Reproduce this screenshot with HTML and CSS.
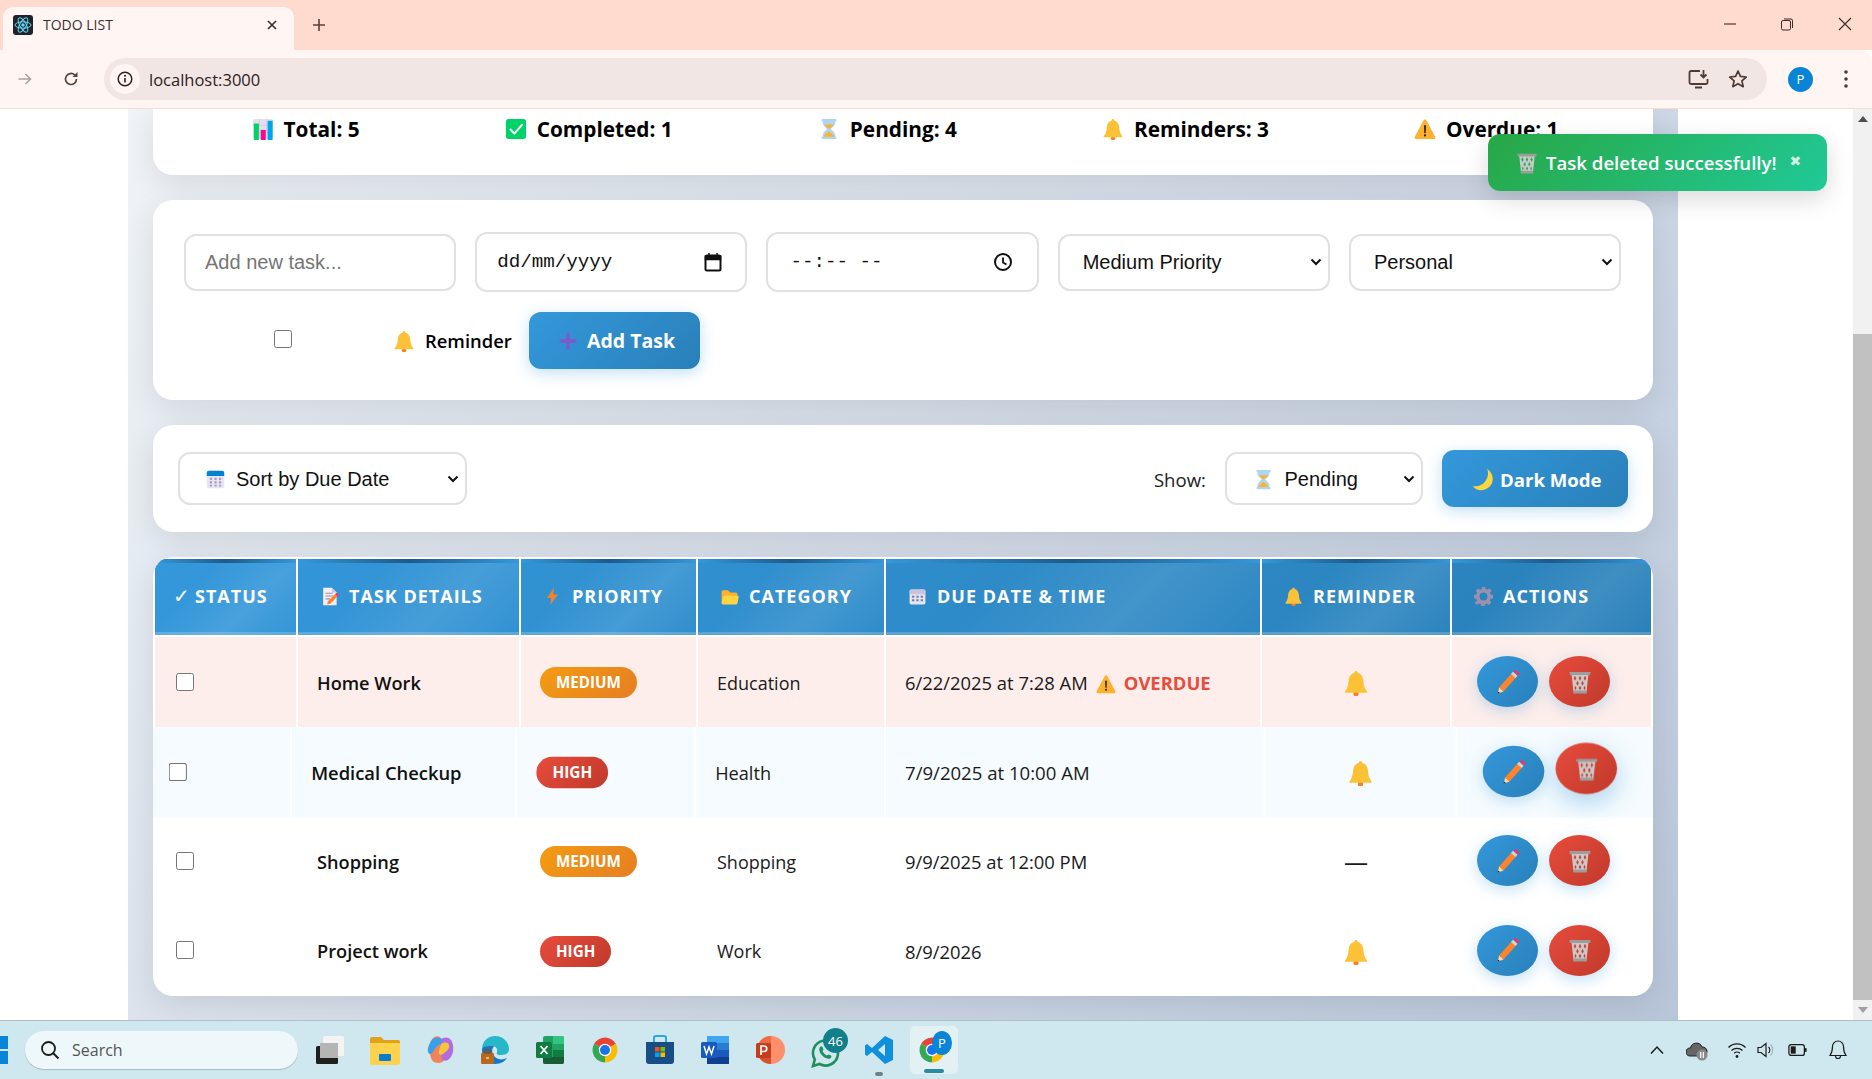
FILE: index.html
```html
<!DOCTYPE html>
<html lang="en">
<head>
<meta charset="utf-8">
<title>TODO LIST</title>
<link rel="stylesheet" href="styles.css">
</head>
<body>
<svg class="defs" xmlns="http://www.w3.org/2000/svg">
  <symbol id="i-chart" viewBox="0 0 24 24"><rect x="1" y="1" width="22" height="22" rx="2" fill="#e6dff0"/><path d="M8 1v22M16 1v22M1 8h22M1 16h22" stroke="#cfc6de" stroke-width=".8"/><rect x="2" y="6" width="5.5" height="18" fill="#00d26a"/><rect x="9.5" y="13" width="5.5" height="11" fill="#f70a8d"/><rect x="17" y="3" width="5.5" height="21" fill="#00a6ed"/></symbol>
  <symbol id="i-check" viewBox="0 0 24 24"><rect x="1" y="1" width="22" height="22" rx="3" fill="#00d26a"/><path d="M6 12.5l4.2 4.5L18.5 7.5" fill="none" stroke="#fff" stroke-width="2.2" stroke-linecap="round" stroke-linejoin="round"/></symbol>
  <symbol id="i-hourglass" viewBox="0 0 24 24"><path d="M4 1h16v2.500h-1C19 9 15 10.500 14 12c1 1.500 5 3 5 8.500h1V23H4v-2.500h1C5 15 9 13.500 10 12 9 10.500 5 9 5 3.500H4z" fill="#aed6f1"/><path d="M7 7h10c-1 2.500-4 3.500-5 5-1-1.500-4-2.500-5-5zM6.500 20.500c.5-3 4-4 5.500-6 1.500 2 5 3 5.500 6z" fill="#ffb02e"/></symbol>
  <symbol id="i-bell" viewBox="0 0 24 24"><circle cx="12" cy="22" r="2.400" fill="#f8802b"/><path d="M12 1c1 0 1.500.7 1.500 1.600C17 3.500 18.500 6.500 18.800 10c.3 4 1 7 3.200 9.500.4.600.2 1.500-.8 1.500H2.800c-1 0-1.200-.9-.8-1.500C4.200 17 4.900 14 5.200 10 5.500 6.500 7 3.500 10.500 2.600 10.500 1.700 11 1 12 1z" fill="#fcc237"/></symbol>
  <symbol id="i-warn" viewBox="0 0 24 24"><path d="M12 1.500c.7 0 1.200.4 1.600 1.100l9.600 18.200c.5 1-.1 2.200-1.300 2.200H2.100C.9 23 .3 21.800.8 20.800L10.400 2.600c.4-.7.900-1.100 1.600-1.100z" fill="#ffb02e"/><path d="M11 8h2l-.3 8.500h-1.400z" fill="#1c1c1c"/><circle cx="12" cy="19" r="1.200" fill="#1c1c1c"/></symbol>
  <symbol id="i-plus" viewBox="0 0 24 24"><path d="M10 2h4v8h8v4h-8v8h-4v-8H2v-4h8z" fill="#7b5bc8"/></symbol>
  <symbol id="i-calendar" viewBox="0 0 24 24"><rect x="2" y="2" width="20" height="20" rx="2.500" fill="#e9e3f2"/><path d="M2 8V4.500A2.500 2.500 0 0 1 4.500 2h15A2.500 2.500 0 0 1 22 4.500V8z" fill="#0084ce"/><g fill="#a79cc2"><rect x="5.500" y="10" width="2.500" height="2.500"/><rect x="10.800" y="10" width="2.500" height="2.500"/><rect x="16" y="10" width="2.500" height="2.500"/><rect x="5.500" y="14" width="2.500" height="2.500"/><rect x="10.800" y="14" width="2.500" height="2.500"/><rect x="16" y="14" width="2.500" height="2.500"/><rect x="5.500" y="18" width="2.500" height="2"/><rect x="10.800" y="18" width="2.500" height="2"/><rect x="16" y="18" width="2.500" height="2"/></g></symbol>
  <symbol id="i-cal-head" viewBox="0 0 24 24"><rect x="2" y="3" width="20" height="19" rx="2" fill="#e8e4f0"/><path d="M2 9V5a2 2 0 0 1 2-2h16a2 2 0 0 1 2 2v4z" fill="#c9c3db"/><g fill="#6f7fa8"><rect x="5" y="11" width="3" height="2.500"/><rect x="10.500" y="11" width="3" height="2.500"/><rect x="16" y="11" width="3" height="2.500"/><rect x="5" y="15.500" width="3" height="2.500"/><rect x="10.500" y="15.500" width="3" height="2.500"/><rect x="16" y="15.500" width="3" height="2.500"/></g></symbol>
  <symbol id="i-moon" viewBox="0 0 24 24"><path d="M16 1c5 3 7 9 5 14s-8 8-13 7c-3-.5-5-2-6-4 5 1 10-1 12.500-5S18 5 16 1z" fill="#fcd53f"/></symbol>
  <symbol id="i-memo" viewBox="0 0 24 24"><path d="M4 1h11l6 6v16H4z" fill="#f3eef8"/><path d="M15 1l6 6h-6z" fill="#cdc4d6"/><path d="M7 8h9M7 11.500h10M7 15h6" stroke="#998ea4" stroke-width="1.300"/><path d="M9 22l1-4 9-9 3 3-9 9z" fill="#ff822d"/><path d="M19 9l1.800-1.800 3 3L22 12z" fill="#f92f60"/></symbol>
  <symbol id="i-bolt" viewBox="0 0 24 24"><path d="M14 1L5 14h5.500L9 23l10-13.500h-6z" fill="#f8802b"/></symbol>
  <symbol id="i-folder" viewBox="0 0 24 24"><path d="M2 6a2 2 0 0 1 2-2h6l3 3h7a2 2 0 0 1 2 2v11H2z" fill="#ffb02e"/><path d="M5 11h17a1.500 1.500 0 0 1 1.500 2l-1.500 7.500a2 2 0 0 1-2 1.500H4a2 2 0 0 1-2-2l1.500-7.500A2 2 0 0 1 5 11z" fill="#fcd53f"/></symbol>
  <symbol id="i-gear" viewBox="0 0 24 24"><path fill-rule="evenodd" d="M10 1h4l.6 3 2.400 1 2.600-1.700 2.800 2.800L20 8.700l1 2.400 3 .6v4l-3 .6-1 2.400 1.700 2.600-2.800 2.800-2.600-1.700-2.400 1-.6 3h-4l-.6-3-2.400-1-2.600 1.700-2.800-2.800L4 18.700l-1-2.400-3-.6v-4l3-.6 1-2.400L2.300 6.100l2.800-2.800L7.700 5l2.400-1zM12 8.500a5 5 0 1 0 0 10 5 5 0 0 0 0-10z" transform="translate(0 -1.500)" fill="#9b91ad"/></symbol>
  <symbol id="i-pencil" viewBox="0 0 24 24"><path d="M3 17.500L16 3l4.500 4L7.500 21.500z" fill="#ff822d"/><path d="M3 17.500l4.500 4-5.500 2z" fill="#fcd7a0"/><path d="M1.800 22l1.200 0 .6 1-1.600.5z" fill="#222"/><path d="M15 4l2-2.200 4.500 4L19.500 8z" fill="#d3d3d3"/><path d="M17.500 1.200l2-1.200 4 3.500-1.500 2.200z" fill="#f92f60"/></symbol>
  <symbol id="i-trash" viewBox="0 0 24 24"><path fill-rule="evenodd" fill="#c9c9c9" d="M3.500 4h17l-2 18h-13zM7 5.800l1.300 2.500L7 10.800 5.700 8.300zM12 5.800l1.300 2.500-1.300 2.500-1.300-2.500zM17 5.800l1.300 2.500-1.300 2.500-1.300-2.500zM9.500 10.800l1.300 2.500-1.300 2.500-1.300-2.500zM14.500 10.800l1.300 2.500-1.300 2.500-1.300-2.500zM7.500 15.800l1 2.300-1 2.200-1-2.200zM12 15.800l1.300 2.300-1.300 2.200-1.300-2.200zM16.500 15.800l1 2.300-1 2.200-1-2.200z"/><path d="M1.500 2h21l-.4 3H1.900z" fill="#9d9d9d"/><path d="M5 20.500h14l-.4 3H5.400z" fill="#9d9d9d"/></symbol>
  <symbol id="i-chrome" viewBox="0 0 48 48"><path d="M24 24L6.700 14A20 20 0 0 1 41.300 14z" fill="#ea4335"/><path d="M24 24L41.300 14A20 20 0 0 1 24 44z" fill="#fbbc04"/><path d="M24 24L24 44A20 20 0 0 1 6.700 14z" fill="#34a853"/><circle cx="24" cy="24" r="10" fill="#fff"/><circle cx="24" cy="24" r="8" fill="#1a73e8"/></symbol>
</svg>

<header class="tabstrip">
  <div class="tab">
    <svg class="favicon" viewBox="0 0 20 20"><rect width="20" height="20" rx="3" fill="#20232a"/><g fill="none" stroke="#61dafb" stroke-width="1"><ellipse cx="10" cy="10" rx="8" ry="3.200"/><ellipse cx="10" cy="10" rx="8" ry="3.200" transform="rotate(60 10 10)"/><ellipse cx="10" cy="10" rx="8" ry="3.200" transform="rotate(120 10 10)"/></g><circle cx="10" cy="10" r="1.700" fill="#61dafb"/></svg>
    <span class="tab-title">TODO LIST</span>
    <svg class="tab-close" viewBox="0 0 12 12"><path d="M2 2l8 8M10 2l-8 8" stroke="#3b2a26" stroke-width="1.600"/></svg>
  </div>
  <svg class="new-tab" viewBox="0 0 14 14"><path d="M7 1v12M1 7h12" stroke="#5b4038" stroke-width="1.600"/></svg>
  <div class="win-controls">
    <svg viewBox="0 0 14 14"><path d="M1 7h12" stroke="#3b2a26" stroke-width="1.100"/></svg>
    <svg viewBox="0 0 14 14"><rect x="1.500" y="3.500" width="9" height="9.500" rx="1.500" fill="none" stroke="#3b2a26"/><path d="M4 2h7a1.500 1.500 0 0 1 1.500 1.500V11" fill="none" stroke="#3b2a26"/></svg>
    <svg viewBox="0 0 14 14"><path d="M1 1l12 12M13 1L1 13" stroke="#3b2a26" stroke-width="1.100"/></svg>
  </div>
</header>

<nav class="toolbar">
  <svg class="nav-icon nav-forward" viewBox="0 0 16 16"><path d="M1.500 8h12M8.500 3l5 5-5 5" fill="none" stroke="#ada3a0" stroke-width="1.600"/></svg>
  <svg class="nav-icon nav-reload" viewBox="0 0 16 16"><path d="M13.500 8a5.500 5.500 0 1 1-1.700-4" fill="none" stroke="#5b4038" stroke-width="1.700"/><path d="M14.500 1v5h-5z" fill="#5b4038"/></svg>
  <div class="omnibox">
    <span class="site-info"><svg viewBox="0 0 16 16"><circle cx="8" cy="8" r="6.800" fill="none" stroke="#2b2220" stroke-width="1.500"/><path d="M8 7v4.500" stroke="#2b2220" stroke-width="1.600"/><circle cx="8" cy="4.800" r="1" fill="#2b2220"/></svg></span>
    <span class="url">localhost:3000</span>
    <svg class="omni-install" viewBox="0 0 22 20"><path d="M12 2H3a1.500 1.500 0 0 0-1.500 1.500v10A1.500 1.500 0 0 0 3 15h15a1.500 1.500 0 0 0 1.500-1.500V10" fill="none" stroke="#4f3a34" stroke-width="1.800"/><path d="M7 18.500h7" stroke="#4f3a34" stroke-width="2"/><path d="M15.500 1v7M12.500 5.500l3 3 3-3" fill="none" stroke="#4f3a34" stroke-width="1.800"/></svg>
    <svg class="omni-star" viewBox="0 0 20 20"><path d="M10 2l2.400 5.400 5.900.6-4.400 3.900 1.300 5.800L10 14.700l-5.200 3 1.300-5.800L1.700 8l5.900-.6z" fill="none" stroke="#4f3a34" stroke-width="1.700" stroke-linejoin="round"/></svg>
  </div>
  <span class="avatar">P</span>
  <svg class="menu-dots" viewBox="0 0 6 20"><circle cx="3" cy="3" r="1.800" fill="#4f3a34"/><circle cx="3" cy="10" r="1.800" fill="#4f3a34"/><circle cx="3" cy="17" r="1.800" fill="#4f3a34"/></svg>
</nav>

<main class="viewport">
  <div class="page">
    <section class="card stats">
      <div class="stat"><svg class="stat-icon"><use href="#i-chart"/></svg>Total: 5</div>
      <div class="stat"><svg class="stat-icon"><use href="#i-check"/></svg>Completed: 1</div>
      <div class="stat"><svg class="stat-icon"><use href="#i-hourglass"/></svg>Pending: 4</div>
      <div class="stat"><svg class="stat-icon"><use href="#i-bell"/></svg>Reminders: 3</div>
      <div class="stat"><svg class="stat-icon"><use href="#i-warn"/></svg>Overdue: 1</div>
    </section>

    <section class="card form-card">
      <div class="form-row">
        <input class="field field-text" type="text" placeholder="Add new task...">
        <div class="field field-tall field-date"><span>dd/mm/yyyy</span><svg class="picker" viewBox="0 0 18 20"><rect x="1.500" y="3.500" width="15" height="15" rx="1.500" fill="none" stroke="#111" stroke-width="2"/><path d="M1.500 4h15v3.500h-15zM5 1v3M13 1v3" fill="#111" stroke="#111" stroke-width="1.500"/></svg></div>
        <div class="field field-tall field-date field-time"><span class="time">--:-- --</span><svg class="picker" viewBox="0 0 20 20"><circle cx="10" cy="10" r="8" fill="none" stroke="#111" stroke-width="2"/><path d="M10 5.500V10.500l3.500 2" fill="none" stroke="#111" stroke-width="1.800"/></svg></div>
        <div class="field field-select">Medium Priority<svg class="chev" viewBox="0 0 12 8"><path d="M1.500 1.500L6 6l4.500-4.500" fill="none" stroke="#111" stroke-width="2"/></svg></div>
        <div class="field field-select">Personal<svg class="chev" viewBox="0 0 12 8"><path d="M1.500 1.500L6 6l4.500-4.500" fill="none" stroke="#111" stroke-width="2"/></svg></div>
      </div>
      <div class="form-actions">
        <label class="reminder">
          <input class="reminder-box" type="checkbox">
          <svg class="reminder-bell"><use href="#i-bell"/></svg>
          <span>Reminder</span>
        </label>
        <button class="btn btn-add" type="button"><svg class="btn-icon"><use href="#i-plus"/></svg>Add Task</button>
      </div>
    </section>

    <section class="card bar">
      <div class="field field-select sort"><svg class="opt-icon"><use href="#i-calendar"/></svg>Sort by Due Date<svg class="chev" viewBox="0 0 12 8"><path d="M1.500 1.500L6 6l4.500-4.500" fill="none" stroke="#111" stroke-width="2"/></svg></div>
      <div class="bar-right">
        <span class="show-label">Show:</span>
        <div class="field field-select show"><svg class="opt-icon"><use href="#i-hourglass"/></svg>Pending<svg class="chev" viewBox="0 0 12 8"><path d="M1.500 1.500L6 6l4.500-4.500" fill="none" stroke="#111" stroke-width="2"/></svg></div>
        <button class="btn btn-dark" type="button"><svg class="btn-icon"><use href="#i-moon"/></svg>Dark Mode</button>
      </div>
    </section>

    <section class="card table-card">
      <table class="tasks">
        <colgroup><col class="c1"><col class="c2"><col class="c3"><col class="c4"><col class="c5"><col class="c6"><col class="c7"></colgroup>
        <thead>
          <tr>
            <th><span class="tick">✓</span>Status</th>
            <th><svg class="th-icon"><use href="#i-memo"/></svg>Task Details</th>
            <th><svg class="th-icon"><use href="#i-bolt"/></svg>Priority</th>
            <th><svg class="th-icon"><use href="#i-folder"/></svg>Category</th>
            <th><svg class="th-icon"><use href="#i-cal-head"/></svg>Due Date &amp; Time</th>
            <th><svg class="th-icon"><use href="#i-bell"/></svg>Reminder</th>
            <th><svg class="th-icon"><use href="#i-gear"/></svg>Actions</th>
          </tr>
        </thead>
        <tbody>
          <tr class="overdue">
            <td><input type="checkbox"></td>
            <td class="name">Home Work</td>
            <td><span class="pill medium">Medium</span></td>
            <td>Education</td>
            <td class="due">6/22/2025 at 7:28 AM<svg class="due-warn"><use href="#i-warn"/></svg><span class="over">OVERDUE</span></td>
            <td class="center"><svg class="row-bell"><use href="#i-bell"/></svg></td>
            <td class="acts"><div class="actions"><button class="round edit" type="button"><svg><use href="#i-pencil"/></svg></button><button class="round del" type="button"><svg><use href="#i-trash"/></svg></button></div></td>
          </tr>
          <tr class="hovered">
            <td><input type="checkbox"></td>
            <td class="name">Medical Checkup</td>
            <td><span class="pill high">High</span></td>
            <td>Health</td>
            <td class="due">7/9/2025 at 10:00 AM</td>
            <td class="center"><svg class="row-bell"><use href="#i-bell"/></svg></td>
            <td class="acts"><div class="actions"><button class="round edit" type="button"><svg><use href="#i-pencil"/></svg></button><button class="round del lifted" type="button"><svg><use href="#i-trash"/></svg></button></div></td>
          </tr>
          <tr>
            <td><input type="checkbox"></td>
            <td class="name">Shopping</td>
            <td><span class="pill medium">Medium</span></td>
            <td>Shopping</td>
            <td class="due">9/9/2025 at 12:00 PM</td>
            <td class="center dash">—</td>
            <td class="acts"><div class="actions"><button class="round edit" type="button"><svg><use href="#i-pencil"/></svg></button><button class="round del" type="button"><svg><use href="#i-trash"/></svg></button></div></td>
          </tr>
          <tr>
            <td><input type="checkbox"></td>
            <td class="name">Project work</td>
            <td><span class="pill high">High</span></td>
            <td>Work</td>
            <td class="due">8/9/2026</td>
            <td class="center"><svg class="row-bell"><use href="#i-bell"/></svg></td>
            <td class="acts"><div class="actions"><button class="round edit" type="button"><svg><use href="#i-pencil"/></svg></button><button class="round del" type="button"><svg><use href="#i-trash"/></svg></button></div></td>
          </tr>
        </tbody>
      </table>
    </section>
  </div>

  <div class="scrollbar">
    <svg class="sb-arrow" viewBox="0 0 10 6"><path d="M5 0l5 6H0z" fill="#505050"/></svg>
    <div class="sb-track"><div class="sb-thumb"></div></div>
    <svg class="sb-arrow" viewBox="0 0 10 6"><path d="M5 6l5-6H0z" fill="#a0a0a0"/></svg>
  </div>

  <div class="toast"><svg class="toast-icon"><use href="#i-trash"/></svg><span class="toast-text">Task deleted successfully!</span><span class="toast-x">✖</span></div>
</main>

<footer class="taskbar">
  <svg class="start" viewBox="0 0 9 28"><path d="M0 0h8v13H0zM0 15h8v13H0z" fill="#0a84d6"/></svg>
  <div class="search">
    <svg viewBox="0 0 20 20"><circle cx="8.500" cy="8.500" r="6.500" fill="none" stroke="#1c1c1c" stroke-width="1.800"/><path d="M13 13l5.500 5.500" stroke="#1c1c1c" stroke-width="2"/></svg>
    <span>Search</span>
  </div>
  <div class="apps">
    <svg class="app" viewBox="0 0 30 30"><rect x="1" y="11" width="22" height="18" rx="1.500" fill="#1f1f1f"/><rect x="8" y="1" width="21" height="20" rx="1.500" fill="#f4f4f4"/><rect x="5" y="8" width="18" height="15" fill="#b5b5b5"/></svg>
    <svg class="app" viewBox="0 0 30 30"><path d="M0 4a2 2 0 0 1 2-2h9l3 3h14a2 2 0 0 1 2 2v3H0z" fill="#e0a11b"/><path d="M0 8h30v20a2 2 0 0 1-2 2H2a2 2 0 0 1-2-2z" fill="#ffd24d"/><rect x="9" y="19" width="12" height="7" rx="1" fill="#0a7ccf"/></svg>
    <svg class="app" viewBox="0 0 30 30"><path d="M8 3c4-3 8-2 9 3l3 13c1 5-2 9-6 9-6 0-8-3-9-9C4 13 5 6 8 3z" fill="#f0835a"/><path d="M18 3c5-2 9 1 10 7 1 7-1 12-5 15-2 1-5 1-6-1l-2-14c-1-4 0-6 3-7z" fill="#b56be0"/><path d="M4 10c2-5 6-9 11-7 3 1 2 5 0 6-3 2-5 4-7 8-1 2-4 3-5 0-.5-2 0-5 1-7z" fill="#37a0e8"/><path d="M16 9c3-2 7-2 8 1 1 4-3 7-6 9-3 2-5 0-4-3z" fill="#f3c63c"/></svg>
    <svg class="app" viewBox="0 0 30 30"><path d="M2 15C2 6 8 1 15 1c8 0 14 6 14 13 0 5-4 6-9 6-3 0-4-1-3-3 1-3-1-6-5-6-5 0-10 4-10 4z" fill="#27b7c9"/><path d="M2 15c0 8 6 14 13 14 6 0 10-3 12-6-4 2-9 2-12-1-3-3-4-7-1-11-6 0-12 0-12 4z" fill="#1478c8"/><rect x="1" y="18" width="13" height="11" rx="1" fill="#b56a1f"/><rect x="5" y="15" width="5" height="3" fill="none" stroke="#8a4f15" stroke-width="1.300"/><rect x="6" y="22" width="3" height="2" fill="#f0c04a"/></svg>
    <svg class="app" viewBox="0 0 30 30"><rect x="8" y="1" width="21" height="28" rx="2" fill="#21a366"/><path d="M18 1h9a2 2 0 0 1 2 2v6H18z" fill="#33c481"/><rect x="18" y="15" width="11" height="7" fill="#107c41"/><path d="M8 22h21v5a2 2 0 0 1-2 2H10a2 2 0 0 1-2-2z" fill="#185c37"/><rect x="1" y="7" width="16" height="16" rx="1.500" fill="#107c41"/><path d="M5.500 11l7 8M12.500 11l-7 8" stroke="#fff" stroke-width="1.800"/></svg>
    <svg class="app"><use href="#i-chrome"/></svg>
    <svg class="app" viewBox="0 0 30 30"><path d="M9 7V3a2 2 0 0 1 2-2h8a2 2 0 0 1 2 2v4" fill="none" stroke="#2aa7e0" stroke-width="2"/><path d="M1 7h28v19a3 3 0 0 1-3 3H4a3 3 0 0 1-3-3z" fill="#174e86"/><rect x="10" y="12" width="4.500" height="4.500" fill="#f25022"/><rect x="15.500" y="12" width="4.500" height="4.500" fill="#7fba00"/><rect x="10" y="17.500" width="4.500" height="4.500" fill="#00a4ef"/><rect x="15.500" y="17.500" width="4.500" height="4.500" fill="#ffb900"/></svg>
    <svg class="app" viewBox="0 0 30 30"><rect x="7" y="1" width="22" height="28" rx="2" fill="#2b7cd3"/><rect x="7" y="1" width="22" height="7" fill="#41a5ee"/><rect x="7" y="15" width="22" height="7" fill="#185abd"/><rect x="7" y="22" width="22" height="7" fill="#103f91"/><rect x="1" y="7" width="16" height="16" rx="1.500" fill="#185abd"/><path d="M4 11l2.500 8L9 12l2.500 7L14 11" fill="none" stroke="#fff" stroke-width="1.500"/></svg>
    <svg class="app" viewBox="0 0 30 30"><circle cx="16" cy="15" r="14" fill="#ff8f6b"/><path d="M16 15V1a14 14 0 0 0-14 14z" fill="#ed6c47"/><path d="M16 15v14a14 14 0 0 1-14-14z" fill="#d35230"/><rect x="1" y="8" width="15" height="15" rx="1.500" fill="#c43e1c"/><path d="M6 20V11h3a2.500 2.500 0 0 1 0 5.500H6" fill="none" stroke="#fff" stroke-width="1.700"/></svg>
    <div class="wa-wrap">
      <svg class="wa" viewBox="0 0 30 30"><path d="M3 28l1.800-6.500A12.500 12.500 0 1 1 9.500 26z" fill="none" stroke="#1f8f5f" stroke-width="2.600"/><path d="M10 9c1-1 2-1 2.500 0l1 2.500-1 1.500c1 2 2.500 3.500 4.500 4.500l1.500-1 2.500 1c1 1 0 2.500-1 3-3 1-8-2-10-6-1-2-1-4 0-5.500z" fill="#1f8f5f"/></svg>
      <span class="badge">46</span>
    </div>
    <div class="vs-wrap">
      <svg class="app" viewBox="0 0 30 30"><path d="M21 1l8 4v20l-8 4L8 17l-5 4-2-1.500v-9L3 9l5 4zM21 9l-7 6 7 6z" fill="#0f8fdc"/></svg>
      <span class="running"></span>
    </div>
    <div class="active-app">
      <svg class="app"><use href="#i-chrome"/></svg>
      <span class="profile-badge">P</span>
      <span class="active-bar"></span>
    </div>
  </div>
  <div class="tray">
    <svg viewBox="0 0 14 10" class="t-caret"><path d="M1 8.500L7 2l6 6.500" fill="none" stroke="#1c1c1c" stroke-width="1.500"/></svg>
    <svg viewBox="0 0 22 22" class="t-cloud"><path d="M4 17a4 4 0 0 1 .5-8A6 6 0 0 1 16 8a4.500 4.500 0 0 1 1 9z" fill="#666" stroke="#222" stroke-width="1"/><circle cx="16" cy="16" r="5.500" fill="#8a8a8a"/><path d="M14.700 13v6M17.300 13v6" stroke="#fff" stroke-width="1.200"/></svg>
    <svg viewBox="0 0 20 20" class="t-icon t-wifi"><path d="M1.500 7.500a12 12 0 0 1 17 0M4.500 10.500a8 8 0 0 1 11 0M7.200 13.200a4 4 0 0 1 5.600 0" fill="none" stroke="#1c1c1c" stroke-width="1.300"/><circle cx="10" cy="16.500" r="1.400" fill="#1c1c1c"/></svg>
    <svg viewBox="0 0 20 20" class="t-icon"><path d="M2 7.500h3L10 3.500v13L5 12.500H2z" fill="none" stroke="#1c1c1c" stroke-width="1.200"/><path d="M12.500 7a4 4 0 0 1 0 6" fill="none" stroke="#1c1c1c" stroke-width="1.100"/><path d="M14.500 4.500a8 8 0 0 1 0 11" fill="none" stroke="#9fb3ba" stroke-width="1.100"/></svg>
    <svg viewBox="0 0 22 20" class="t-icon t-batt"><rect x="1" y="4" width="17" height="12" rx="2.500" fill="none" stroke="#1c1c1c" stroke-width="1.400"/><rect x="3" y="6" width="5.500" height="8" fill="#1c1c1c"/><path d="M19.500 8v4" stroke="#1c1c1c" stroke-width="2"/></svg>
    <svg viewBox="0 0 20 22" class="t-bell"><path d="M10 2a5.500 5.500 0 0 1 5.500 5.500c0 5 1 7 2.500 9H2c1.500-2 2.500-4 2.500-9A5.500 5.500 0 0 1 10 2zM7.500 17a2.500 2.500 0 0 0 5 0" fill="none" stroke="#1c1c1c" stroke-width="1.200"/></svg>
  </div>
</footer>
</body>
</html>
```
FILE: styles.css
```css
* { box-sizing: border-box; }
html, body { margin: 0; padding: 0; }
body {
  width: 1872px;
  height: 1079px;
  overflow: hidden;
  display: flex;
  flex-direction: column;
  font-family: "Open Sans", "Noto Sans", sans-serif;
  color: #111;
  background: #fff;
}
.defs { display: none; }

/* browser chrome */
.tabstrip {
  height: 50px;
  flex: none;
  background: #ffdbcf;
  display: flex;
  align-items: flex-end;
}
.tab {
  width: 291px;
  height: 43px;
  margin-left: 3px;
  padding: 0 16px 8px 10px;
  background: #fff5f2;
  border-radius: 10px 10px 0 0;
  display: flex;
  align-items: center;
}
.favicon { width: 20px; height: 20px; flex: none; }
.tab-title { margin-left: 10px; flex: 1; font-size: 14px; color: #3b2f2c; }
.tab-close { width: 12px; height: 12px; }
.new-tab { width: 14px; height: 14px; margin: 0 0 18px 18px; }
.win-controls {
  margin-left: auto;
  display: flex;
  gap: 44px;
  padding: 0 20px 19px 0;
}
.win-controls svg { width: 14px; height: 14px; }
.win-controls svg:first-child { margin-right: -1px; }

.toolbar {
  height: 59px;
  flex: none;
  background: #fff5f2;
  border-bottom: 1px solid #f7dcd2;
  display: flex;
  align-items: center;
  padding: 0 22px 0 17px;
  border-top-right-radius: 10px;
}
.nav-icon { width: 16px; height: 16px; flex: none; }
.nav-reload { margin-left: 30px; }
.omnibox {
  margin-left: 25px;
  width: 1663px;
  height: 42px;
  border-radius: 21px;
  background: #f2e6e5;
  display: flex;
  align-items: center;
  padding: 0 19px 0 6px;
}
.site-info {
  width: 30px;
  height: 30px;
  border-radius: 50%;
  background: #fff5f2;
  display: flex;
  align-items: center;
  justify-content: center;
}
.site-info svg { width: 16px; height: 16px; }
.url { margin-left: 9px; flex: 1; font-size: 16.5px; color: #2b2220; }
.omni-install { width: 22px; height: 20px; }
.omni-star { width: 20px; height: 20px; margin-left: 18px; }
.avatar {
  width: 25px;
  height: 25px;
  margin-left: 21px;
  border-radius: 50%;
  background: #0a84d6;
  color: #fff;
  font-size: 13px;
  display: flex;
  align-items: center;
  justify-content: center;
  flex: none;
}
.menu-dots { width: 6px; height: 20px; margin-left: 30px; flex: none; }

/* viewport */
.viewport {
  flex: 1;
  min-height: 0;
  display: flex;
  position: relative;
  overflow: hidden;
  background: #fff;
}
.page {
  width: 1550px;
  margin: 0 175px 0 128px;
  padding: 0 25px;
  background: linear-gradient(135deg, #f0f4f8 0%, #b9c6da 100%);
  flex: none;
  display: flex;
  flex-direction: column;
  gap: 25px;
}
.card {
  background: #fff;
  border-radius: 20px;
  box-shadow: 0 8px 32px rgba(0, 0, 0, .1);
  flex: none;
}

/* stats */
.stats {
  height: 66px;
  padding: 0 22px 26px 26px;
  border-radius: 0 0 20px 20px;
  display: flex;
  justify-content: space-around;
}
.stat {
  height: 40px;
  display: flex;
  align-items: center;
  gap: 10px;
  font-size: 20.8px;
  font-weight: 700;
  color: #000;
}
.stat-icon { width: 22px; height: 22px; }

/* fields */
.form-card { height: 200px; padding: 32px 32px 0 31px; }
.form-row {
  display: grid;
  grid-template-columns: repeat(5, 1fr);
  column-gap: 19.2px;
  align-items: center;
}
.field {
  height: 57px;
  border: 2px solid #e1e1e1;
  border-radius: 12px;
  background: #fff;
  font-family: "Liberation Sans", Arial, sans-serif;
  font-size: 20px;
  color: #111;
  display: flex;
  align-items: center;
}
.field-text { width: 100%; padding: 0 19px; outline: none; }
.field-text::placeholder { color: #757575; opacity: 1; }
.field-tall { height: 60px; }
.field-date {
  justify-content: space-between;
  padding: 0 22px 0 20px;
  font-family: "Liberation Mono", monospace;
  font-size: 19.2px;
}
.field-time { padding-right: 24px; }
.time { padding-left: 2px; }
.picker { width: 20px; height: 20px; flex: none; }
.field-select { position: relative; padding-left: 23px; }
.chev { width: 12px; height: 8px; margin-left: auto; margin-right: 6px; flex: none; }

.form-actions {
  margin-top: 20px;
  display: flex;
  align-items: center;
  gap: 19px;
}
.reminder {
  width: 326px;
  display: flex;
  align-items: center;
  gap: 12px;
  font-size: 18.4px;
  font-weight: 600;
  color: #000;
}
.reminder-box { width: 18px; height: 18px; margin: -3px 90px 0; flex: none; }
.reminder-bell { width: 22px; height: 22px; flex: none; margin: 0 -2px 0 -1px; }

.btn {
  height: 57px;
  border: 0;
  border-radius: 12px;
  color: #fff;
  font-family: "Open Sans", sans-serif;
  font-weight: 700;
  background: linear-gradient(135deg, #3498db, #2980b9);
  box-shadow: 0 4px 15px rgba(52, 152, 219, .3);
  display: flex;
  align-items: center;
  gap: 9px;
}
.btn-add { width: 171px; padding: 0 0 0 29px; font-size: 19.5px; }
.btn-dark { width: 186px; padding: 2px 0 0 29px; font-size: 18.6px; }
.btn-icon { width: 20px; height: 20px; }
.btn-dark .btn-icon { width: 24px; height: 24px; margin-right: -4px; }

/* sort bar */
.bar {
  height: 107px;
  padding: 0 25px;
  display: flex;
  align-items: center;
  justify-content: space-between;
}
.sort { width: 289px; height: 53px; padding: 1px 0 0 25px; }
.opt-icon { width: 21px; height: 21px; margin-right: 10px; flex: none; }
.bar-right { display: flex; align-items: center; gap: 19px; }
.show-label { font-size: 18.6px; color: #222; padding-top: 2px; }
.show { width: 198px; height: 53px; padding: 1px 0 0 26px; }
.show .opt-icon { width: 21px; margin-right: 10.5px; }

/* table */
.table-card { padding: 2px; overflow: hidden; height: 439px; }
.tasks {
  width: 1496px;
  table-layout: fixed;
  border-collapse: separate;
  border-spacing: 0;
}
.c1 { width: 143px; } .c2 { width: 223px; } .c3 { width: 177px; } .c4 { width: 188px; }
.c5 { width: 376px; } .c6 { width: 190px; } .c7 { width: 199px; }
thead tr { background: linear-gradient(135deg, #3498db, #2980b9); }
th {
  height: 78px;
  padding: 0 0 3px 22px;
  text-align: left;
  font-size: 18px;
  font-weight: 700;
  letter-spacing: 1px;
  text-transform: uppercase;
  color: #fff;
  border-right: 2px solid #fff;
  border-bottom: 2px solid #fff;
  box-shadow: inset 0 -3px 0 rgba(255, 255, 255, .2);
  background:
    linear-gradient(90deg, #3498db, #1c5a8c 50%, #3498db) top / 100% 4px no-repeat,
    linear-gradient(135deg, rgba(255, 255, 255, 0) 30%, rgba(255, 255, 255, .1) 65%, rgba(255, 255, 255, 0));
}
th:first-child { border-top-left-radius: 10px; }
th:last-child { border-top-right-radius: 10px; border-right: 0; }
.tick { display: inline-block; width: 19px; margin-left: -4px; margin-right: 3px; font-family: "DejaVu Sans", sans-serif; font-size: 20px; line-height: 1; }
.th-icon { width: 19px; height: 19px; margin-right: 10px; vertical-align: -3px; }

td {
  height: 89.55px;
  padding: 2px 19px 0;
  font-size: 18px;
  color: #1a1a1a;
  border-right: 2px solid #fff;
}
td:last-child { border-right: 0; }
td input[type="checkbox"] { width: 18px; height: 18px; margin: 0 0 5px 2px; vertical-align: middle; }
.name { font-weight: 600; color: #111; font-size: 18.2px; }
.due { font-size: 18.4px; white-space: nowrap; }
.overdue td { background: #fdeeeb; }
.hovered { transform: scale(1.01); }
.hovered td { background: #f5fbfe; }
.pill {
  display: inline-block;
  height: 31px;
  line-height: 31px;
  padding: 0 16px;
  border-radius: 16px;
  color: #fff;
  font-size: 15.2px;
  font-weight: 700;
  text-transform: uppercase;
  vertical-align: -2px;
}
.medium { background: linear-gradient(135deg, #f39c12, #e67e22); }
.high { background: linear-gradient(135deg, #e74c3c, #c0392b); }
.due-warn { width: 20px; height: 20px; margin: 0 8px 0 8px; vertical-align: -4px; }
.over { color: #e74c3c; font-weight: 700; }
.center { text-align: center; }
.row-bell { width: 26px; height: 26px; vertical-align: middle; }
.dash { font-size: 24px; }
.acts { padding: 0 0 0 25px; }
.actions { display: flex; gap: 11px; align-items: center; }
.round {
  width: 61px;
  height: 51px;
  border: 0;
  padding: 0;
  border-radius: 50%;
  display: flex;
  align-items: center;
  justify-content: center;
  box-shadow: 0 4px 15px rgba(52, 152, 219, .3);
}
.round svg { width: 24px; height: 24px; }
.edit { background: linear-gradient(135deg, #3498db, #2980b9); }
.del { background: linear-gradient(135deg, #e74c3c, #c0392b); }
.lifted { transform: translateY(-3px); box-shadow: 0 8px 25px rgba(52, 152, 219, .4); }

/* scrollbar */
.scrollbar {
  width: 19px;
  flex: none;
  margin-left: auto;
  background: #f1f1f1;
  display: flex;
  flex-direction: column;
  align-items: center;
}
.sb-arrow { width: 10px; height: 6px; margin: 7px 0; flex: none; }
.sb-track { flex: 1; width: 100%; }
.sb-thumb { margin-top: 205px; height: 666px; background: #c1c1c1; }

/* toast */
.toast {
  position: absolute;
  top: 25px;
  left: 1488px;
  width: 339px;
  height: 57px;
  border-radius: 12px;
  background: linear-gradient(135deg, #28a745, #20c997);
  box-shadow: 0 8px 25px rgba(0, 0, 0, .15);
  color: #fff;
  display: flex;
  align-items: center;
  padding-left: 28px;
}
.toast-icon { width: 22px; height: 24px; flex: none; }
.toast-text { margin-left: 8px; font-size: 18.6px; font-weight: 600; white-space: nowrap; }
.toast-x { margin-left: 13px; margin-top: -4px; font-family: "DejaVu Sans", sans-serif; font-size: 14px; opacity: .8; }

/* taskbar */
.taskbar {
  height: 59px;
  flex: none;
  background: #cfe8ef;
  border-top: 1px solid #aebfc6;
  display: flex;
  align-items: center;
  position: relative;
}
.start { width: 9px; height: 28px; flex: none; }
.search {
  width: 273px;
  height: 38px;
  margin-left: 16px;
  border-radius: 19px;
  background: #eef7fa;
  box-shadow: 0 1px 1px rgba(0, 0, 0, .2);
  display: flex;
  align-items: center;
  padding-left: 15px;
  gap: 12px;
  font-size: 16px;
  color: #555;
  flex: none;
}
.search svg { width: 20px; height: 20px; }
.apps {
  margin-left: 17px;
  display: flex;
  align-items: center;
  gap: 25px;
}
.app { width: 30px; height: 30px; flex: none; display: block; }
.wa-wrap { width: 38px; height: 36px; position: relative; flex: none; margin-right: -9px; }
.wa { width: 30px; height: 30px; margin-top: 6px; display: block; }
.badge {
  position: absolute;
  top: -4px;
  right: 0;
  width: 25px;
  height: 25px;
  border-radius: 50%;
  background: #12808a;
  color: #fff;
  font-size: 13px;
  display: flex;
  align-items: center;
  justify-content: center;
}
.vs-wrap { position: relative; }
.running {
  position: absolute;
  left: 11px;
  bottom: -11px;
  width: 8px;
  height: 4px;
  border-radius: 2px;
  background: #6f8088;
}
.active-app {
  width: 48px;
  height: 48px;
  margin-left: -9px;
  border-radius: 5px;
  background: #e3f1f5;
  position: relative;
  display: flex;
  align-items: center;
  padding-left: 7px;
  flex: none;
}
.profile-badge {
  position: absolute;
  top: 5px;
  right: 6px;
  width: 20px;
  height: 24px;
  border-radius: 50%;
  background: #0a84d6;
  color: #fff;
  font-size: 13px;
  display: flex;
  align-items: center;
  justify-content: center;
}
.active-bar {
  position: absolute;
  left: 14px;
  bottom: 1px;
  width: 20px;
  height: 4px;
  border-radius: 2px;
  background: #2a8aa0;
}
.tray {
  margin-left: auto;
  display: flex;
  align-items: center;
  padding-right: 24px;
}
.t-caret { width: 14px; height: 10px; }
.t-cloud { width: 22px; height: 22px; margin-left: 22px; }
.t-icon { width: 20px; height: 20px; margin-left: 9px; }
.t-wifi { margin-left: 19px; }
.t-batt { margin-left: 12px; }
.t-bell { width: 20px; height: 22px; margin-left: 20px; }
```
